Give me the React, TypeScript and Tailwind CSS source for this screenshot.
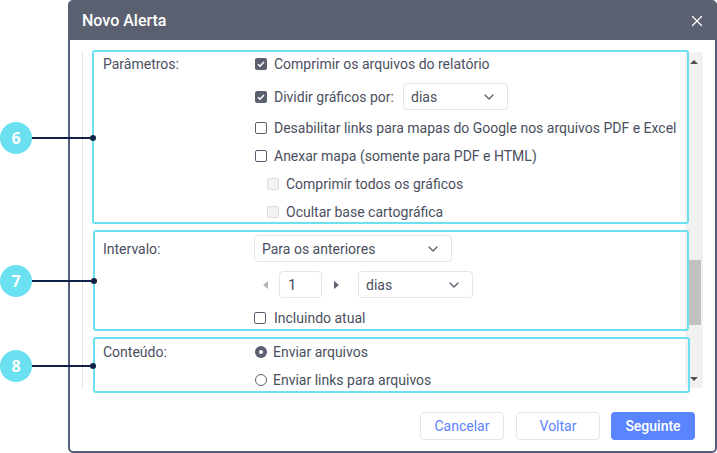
import { ChevronDown, X } from 'lucide-react';

const Check = ({ checked, disabled, label, className = '' }: { checked?: boolean; disabled?: boolean; label?: string; className?: string }) => (
  <div className={`flex items-center ${className}`}>
    {checked ? (
      <span className="flex h-3 w-3 shrink-0 items-center justify-center rounded-[2px] bg-[#5b6070]">
        <svg viewBox="0 0 12 12" className="h-3 w-3" fill="none" stroke="#fff" strokeWidth="1.6">
          <path d="M3 6.2 5 8.2 9 4" />
        </svg>
      </span>
    ) : (
      <span className={`h-3 w-3 shrink-0 rounded-[2px] border ${disabled ? 'border-[#dcdcdc] bg-[#f2f2f2]' : 'border-[#5b6070] bg-white'}`} />
    )}
    {label && <span className="ml-[7px] whitespace-nowrap">{label}</span>}
  </div>
);

const Select = ({ label, className }: { label: string; className: string }) => (
  <div className={`flex h-[27px] items-center justify-between rounded-[4px] border border-[#e4e6ea] bg-white pl-[7px] pr-[10px] ${className}`}>
    <span>{label}</span>
    <ChevronDown size={16} strokeWidth={2} className="text-[#5b6070]" />
  </div>
);

const Marker = ({ n, top, end }: { n: number; top: string; end: string }) => (
  <div className={`absolute left-0 z-20 flex items-center ${top}`}>
    <div className="flex h-8 w-8 items-center justify-center rounded-full bg-[#6be0f0] font-['Open_Sans',sans-serif] text-[16px] font-bold text-white">{n}</div>
    <div className={`h-[2px] bg-[#0f2147] ${end}`} />
    <div className="-ml-[1px] h-[6px] w-[6px] rounded-full bg-[#0f2147]" />
  </div>
);

export default function App() {
  return (
    <div className="relative h-[453px] w-[717px] overflow-hidden bg-white pl-[68px] font-['Roboto',sans-serif] text-[14px] text-[#4a4f5e]">
      <div className="flex h-[453px] w-[649px] flex-col rounded-[5px] border-2 border-t border-[#535f78] bg-white">
        <div className="-mx-[2px] flex h-[39px] shrink-0 items-center justify-between rounded-t-[5px] bg-[#5b6070] pl-[14px] pr-[11px] text-white">
          <span className="text-[16px] font-medium">Novo Alerta</span>
          <X size={18} strokeWidth={1.6} />
        </div>
        <div className="mt-3 flex h-[336px] shrink-0 pl-3">
          <div className="w-[10px] shrink-0 border-l border-[#e2e2e2]" />
          <div className="relative z-10 flex w-[593px] shrink-0 flex-col">
            <section className="-mt-[2px] flex h-[174px] w-[597px] shrink-0 rounded-[3px] border-2 border-[#6be0f0] leading-[20px]">
              <div className="w-[161px] shrink-0 pl-[9px] pt-[2px]">Parâmetros:</div>
              <div className="flex flex-col">
                <Check checked label="Comprimir os arquivos do relatório" className="mt-[2px]" />
                <div className="mt-[9px] flex h-[27px] items-center">
                  <Check checked label="Dividir gráficos por:" />
                  <Select label="dias" className="ml-[9px] w-[105px]" />
                </div>
                <Check label="Desabilitar links para mapas do Google nos arquivos PDF e Excel" className="mt-2" />
                <Check label="Anexar mapa (somente para PDF e HTML)" className="mt-2" />
                <Check disabled label="Comprimir todos os gráficos" className="ml-3 mt-2" />
                <Check disabled label="Ocultar base cartográfica" className="ml-3 mt-2" />
              </div>
            </section>
            <section className="ml-[1px] mt-[6px] flex h-[101px] w-[596px] shrink-0 rounded-[3px] border-2 border-[#6be0f0] leading-[20px]">
              <div className="w-[159px] shrink-0 pl-2 pt-[7px]">Intervalo:</div>
              <div className="flex flex-col pt-[3px]">
                <Select label="Para os anteriores" className="w-[198px]" />
                <div className="mt-[9px] flex h-[27px] items-center">
                  <svg viewBox="0 0 5 8" className="ml-[9px] h-2 w-[5px] fill-[#b5b5b5]"><path d="M5 0v8L0 4z" /></svg>
                  <div className="ml-[11px] flex h-[27px] w-[43px] items-center rounded-[4px] border border-[#e4e6ea] pl-2 text-[15px]">1</div>
                  <svg viewBox="0 0 5 8" className="ml-[12px] h-2 w-[5px] fill-[#5b6070]"><path d="M0 0v8l5-4z" /></svg>
                  <Select label="dias" className="ml-[19px] w-[115px]" />
                </div>
                <div className="mt-[10px] flex items-center">
                  <span className="h-3 w-3 shrink-0 rounded-[2px] border border-[#5b6070] bg-white" />
                  <span className="ml-2">Incluindo atual</span>
                </div>
              </div>
            </section>
            <section className="ml-[1px] mt-[6px] flex h-[56px] w-[597px] shrink-0 rounded-[3px] border-2 border-[#6be0f0] leading-[20px]">
              <div className="w-[159px] shrink-0 pl-2 pt-[3px]">Conteúdo:</div>
              <div className="flex flex-col pl-[1px] pt-[3px]">
                <div className="flex items-center gap-[6px]">
                  <span className="flex h-3 w-3 items-center justify-center rounded-full bg-[#5b6070]"><span className="h-1 w-1 rounded-full bg-white" /></span>
                  <span>Enviar arquivos</span>
                </div>
                <div className="mt-2 flex items-center gap-[6px]">
                  <span className="h-3 w-3 rounded-full border border-[#5b6070]" />
                  <span>Enviar links para arquivos</span>
                </div>
              </div>
            </section>
          </div>
          <div className="flex w-[18px] shrink-0 flex-col items-center bg-[#f1f1f1]">
            <svg viewBox="0 0 8 4" className="mt-2 h-1 w-2 fill-[#505050]"><path d="M4 0l4 4H0z" /></svg>
            <div className="relative z-0 mt-[196px] ml-[2px] h-[65px] w-3 bg-[#c1c1c1]" />
            <div className="flex-1" />
            <svg viewBox="0 0 8 4" className="mb-[7px] h-1 w-2 fill-[#505050]"><path d="M0 0h8L4 4z" /></svg>
          </div>
        </div>
        <div className="mt-6 flex justify-end pr-[20px] text-[#5b84ff]">
          <button className="h-7 w-[84px] rounded-[4px] border border-[#e4e6ea] bg-white">Cancelar</button>
          <button className="ml-3 h-7 w-[84px] rounded-[4px] border border-[#e4e6ea] bg-white">Voltar</button>
          <button className="ml-[11px] h-7 w-[84px] rounded-[4px] bg-[#5b84ff] font-medium text-white">Seguinte</button>
        </div>
      </div>
      <Marker n={6} top="top-[122px]" end="w-[59px]" />
      <Marker n={7} top="top-[265px]" end="w-[60px]" />
      <Marker n={8} top="top-[350px]" end="w-[59px]" />
    </div>
  );
}
